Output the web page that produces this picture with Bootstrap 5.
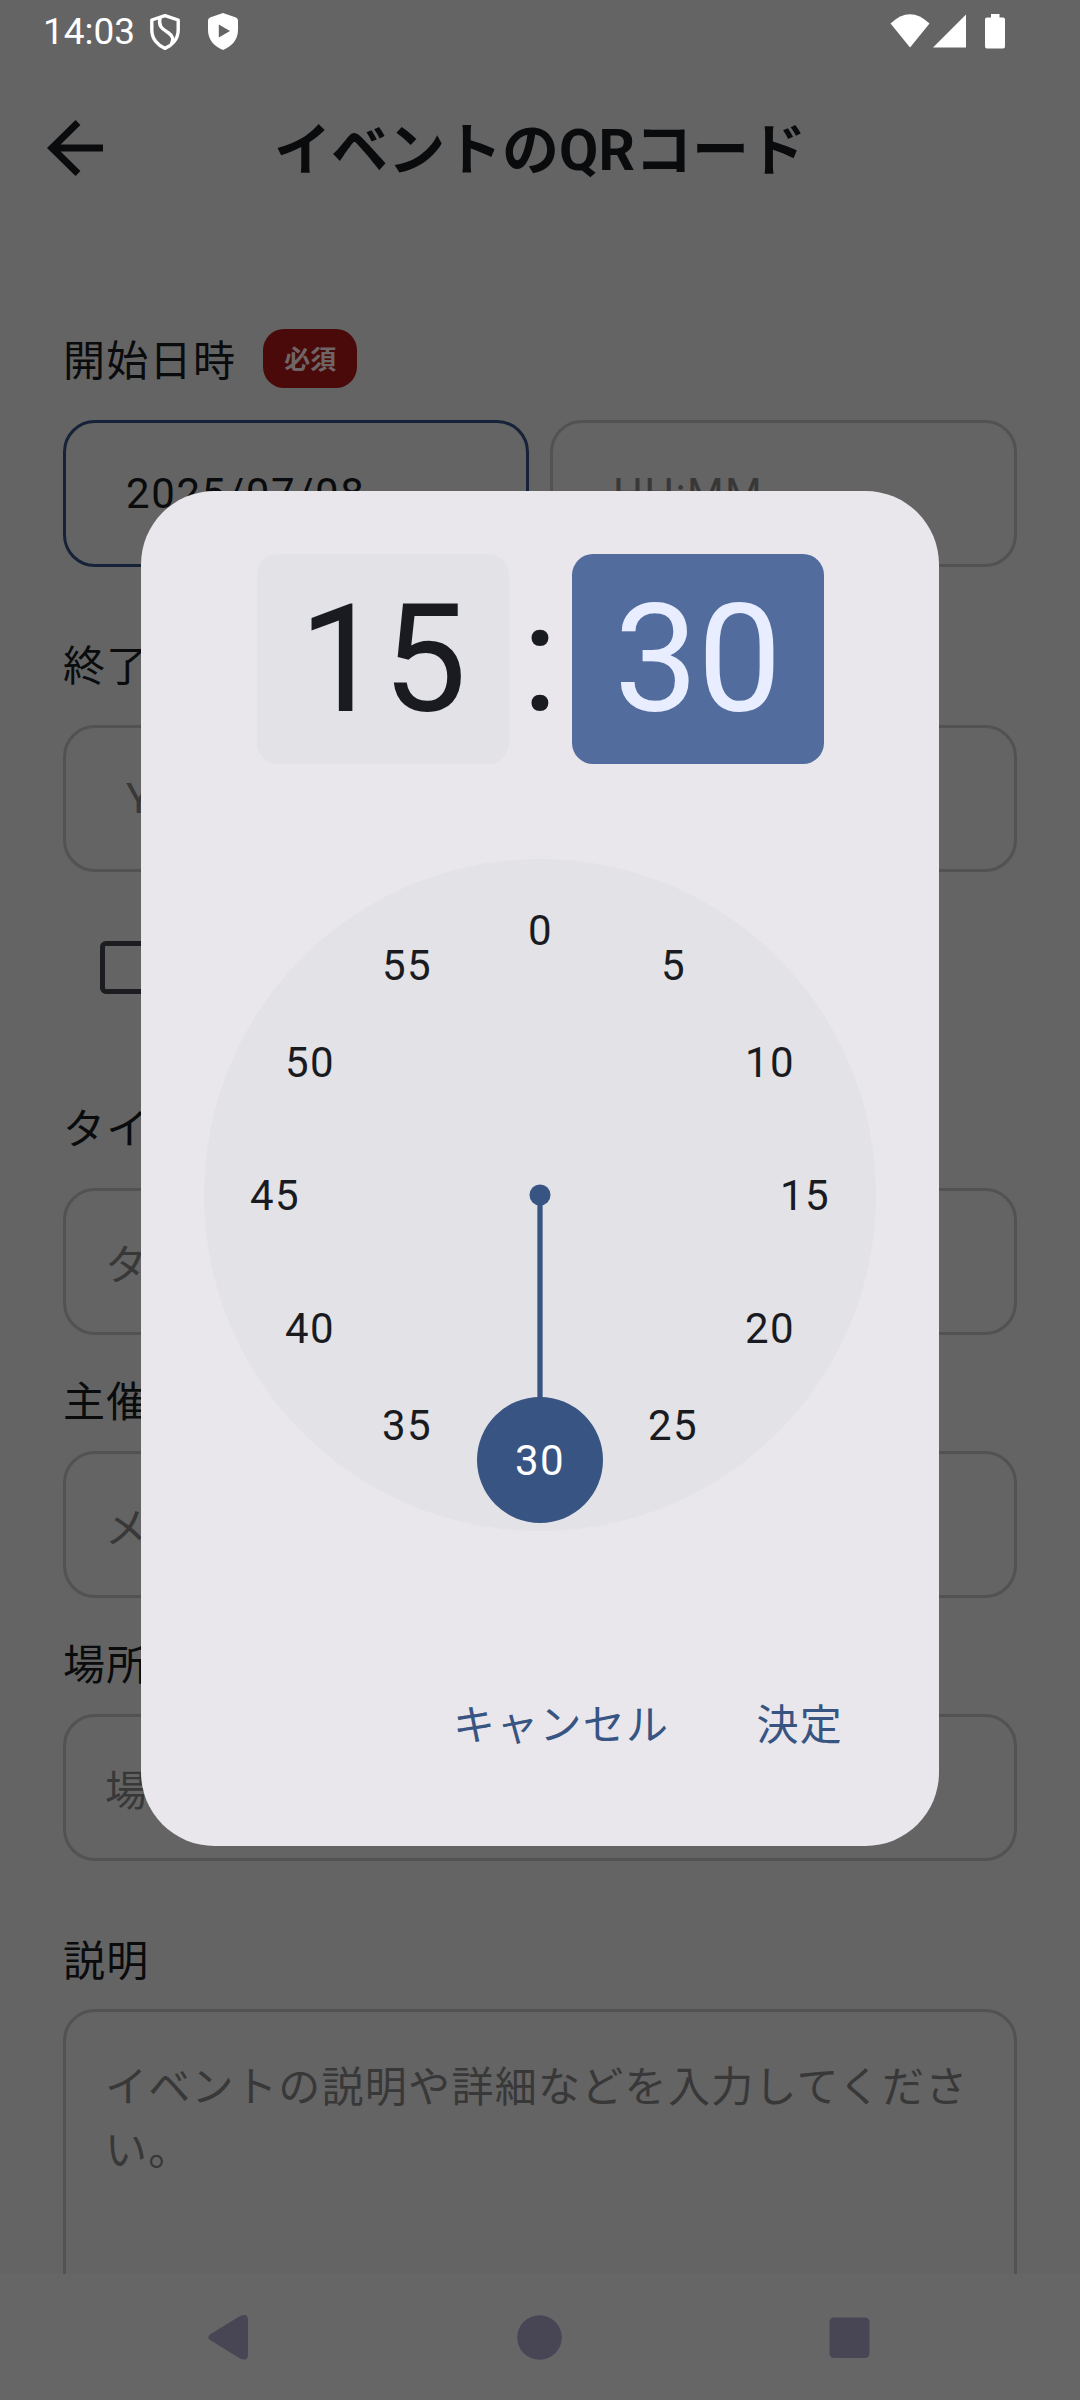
<!DOCTYPE html>
<html lang="ja">
<head>
<meta charset="utf-8">
<meta name="viewport" content="width=device-width, initial-scale=1">
<title>イベントのQRコード</title>
<link href="https://cdn.jsdelivr.net/npm/bootstrap@5.3.0/dist/css/bootstrap.min.css" rel="stylesheet">
<style>
html, body { width: 1080px; height: 2400px; overflow: hidden; }
body { background: #646464; color: #0a0b0d; font-family: Roboto, "Noto Sans CJK JP", sans-serif; font-size: 42px; line-height: 63px; letter-spacing: 1.3px; }
.screen { height: 2400px; }
.statusbar { height: 63px; padding: 0 75px 0 43px; color: #fff; font-size: 37px; letter-spacing: 0; }
.status-shield { margin-left: 15px; }
.appbar { height: 170px; padding: 0 38px; }
.appbar-title { font-size: 57px; font-weight: 700; letter-spacing: 0; line-height: 80px; padding-top: 6px; font-kerning: none; }
.back-spacer { width: 74px; }
.form-area { height: 2041px; padding: 0 63px; }
.label-row { height: 63px; line-height: 68px; }
.label-first span:first-child { padding-top: 6px; }
.required-tag { background: #4b0a0a; color: #6e6666; font-size: 26px; font-weight: 700; line-height: 62px; height: 59px; padding: 0 21px; border-radius: 21px; letter-spacing: 0; margin-left: 27px; }
.field-box { height: 147px; border: 3px solid #525252; border-radius: 32px; padding: 7px 39px 0; color: #383838; }
.field-pair { gap: 21px; }
.field-pair .field-box { padding: 0 0 0 60px; flex: 0 0 466px; }
.field-pair .field-box:last-child { flex: 1 1 0; }
.field-box.active { border-color: #162238; color: #0a0b0d; letter-spacing: 1.6px; }
.field-box.field-area { height: 400px; padding-top: 44px; }
.check-square { width: 53px; height: 53px; border: 5px solid #1b1d20; border-radius: 6px; }
.navbar-sys { height: 126px; background: #666; }
.time-dialog { top: 491px; left: 141px; width: 798px; height: 1355px; border-radius: 73.5px; background: #e9e7ec; color: #1a1b20; padding: 63px; }
.time-chip { width: 252px; height: 210px; border-radius: 21px; background: #e2e2e7; font-size: 150px; line-height: 212px; letter-spacing: -.7px; }
.time-chip.selected { background: #526c9e; color: #e8edff; }
.time-colon { width: 63px; font-size: 150px; line-height: 211px; letter-spacing: 0; height: 210px; }
.dial { width: 672px; height: 672px; margin-top: 95px; }
.dial text { font-size: 42px; fill: #1a1b20; text-anchor: middle; letter-spacing: 1.3px; }
.dial .picked { fill: #fff; }
.dialog-actions { margin-top: 163px; padding-right: 33px; gap: 87px; color: #385482; }
</style>
<script src="https://cdn.jsdelivr.net/npm/bootstrap@5.3.0/dist/js/bootstrap.bundle.min.js"></script>
</head>
<body>
<div class="screen position-relative overflow-hidden d-flex flex-column">
  <header class="statusbar d-flex align-items-center flex-shrink-0">
    <span>14:03</span>
    <svg class="status-shield" width="30" height="36" viewBox="0 0 30 36" fill="none" stroke="#fff" stroke-width="3.4" stroke-linejoin="round"><path d="M15 1.700 L28.200 6 V16 C28.200 25 22 31.500 15 34.300 C8 31.500 1.800 25 1.800 16 V6 Z"/><path d="M10 4 C8 13 13 15 18 18.500 C23 22 24 25 21.500 29.500"/></svg>
    <svg width="30" height="37" viewBox="0 0 30 37" style="margin-left:28px"><path fill="#fff" fill-rule="evenodd" d="M15 0 L28 4.500 Q30 5.300 30 7.500 V17 C30 27 23.500 33.500 15 37 C6.500 33.500 0 27 0 17 V7.500 Q0 5.300 2 4.500 Z M10.800 11.500 V24.500 L22 18 Z"/></svg>
    <div class="d-flex ms-auto align-items-start">
      <svg width="40" height="34" viewBox="0 0 40 34"><path fill="#fff" d="M20 33.500 L.5 9.500 Q20 -9 39.500 9.500 Z"/></svg>
      <svg width="33" height="34" viewBox="0 0 33 34" style="margin-left:3px"><path fill="#fff" d="M33 .5 V33.500 H0 Z"/></svg>
      <svg width="20" height="35" viewBox="0 0 20 35" style="margin-left:19px"><path fill="#fff" d="M6 0 H14.500 V3.500 H18 Q20 3.500 20 5.500 V32.500 Q20 34.500 18 34.500 H2 Q0 34.500 0 32.500 V5.500 Q0 3.500 2 3.500 H6 Z"/></svg>
    </div>
  </header>
  <div class="appbar d-flex align-items-center justify-content-between flex-shrink-0">
    <svg class="back-spacer" height="74" viewBox="0 0 74 74" fill="none" stroke="#0a0b0d" stroke-width="7"><path d="M40 11.500 L14 37 L40 62.500 M13 37 H65"/></svg>
    <h1 class="appbar-title m-0">イベントのQRコード</h1>
    <div class="back-spacer"></div>
  </div>
  <main class="form-area flex-shrink-0 overflow-hidden">
    <div class="label-row label-first d-flex align-items-center" style="margin-top:94px"><span>開始日時</span><span class="required-tag">必須</span></div>
    <div class="field-pair d-flex" style="margin-top:30px">
      <div class="field-box active d-flex align-items-center">2025/07/08</div>
      <div class="field-box d-flex align-items-center">HH:MM</div>
    </div>
    <div class="label-row" style="margin-top:66px">終了日時</div>
    <div class="field-pair d-flex" style="margin-top:29px">
      <div class="field-box d-flex align-items-center">YYYY/MM/DD</div>
      <div class="field-box d-flex align-items-center">HH:MM</div>
    </div>
    <div class="check-square" style="margin:69px 0 0 37px"></div>
    <div class="label-row" style="margin-top:102px">タイトル</div>
    <div class="field-box d-flex align-items-center" style="margin-top:29px">タイトル</div>
    <div class="label-row" style="margin-top:34px">主催者</div>
    <div class="field-box d-flex align-items-center" style="margin-top:19px">メールアドレス</div>
    <div class="label-row" style="margin-top:34px">場所</div>
    <div class="field-box d-flex align-items-center" style="margin-top:19px">場所</div>
    <div class="label-row" style="margin-top:67px">説明</div>
    <div class="field-box field-area" style="margin-top:18px">イベントの説明や詳細などを入力してください。</div>
  </main>
  <footer class="navbar-sys flex-shrink-0">
    <svg width="1080" height="126" viewBox="0 0 1080 126" fill="#484655"><path d="M210 60.500 L240 42 Q248 38.500 248 46 V80.500 Q248 88 240 84.500 L210 66 Q206.500 63.300 210 60.500 Z"/><circle cx="539.500" cy="63.500" r="22.300"/><rect x="829.500" y="43.500" width="40" height="40.500" rx="4.500"/></svg>
  </footer>

  <section class="time-dialog position-absolute d-flex flex-column align-items-center" role="dialog">
    <div class="d-flex text-center">
      <div class="time-chip">15</div><div class="time-colon">:</div><div class="time-chip selected">30</div>
    </div>
    <svg class="dial flex-shrink-0" viewBox="-336 -336 672 672">
      <circle r="336" fill="#e2e2e7"/>
      <path d="M0 0 V210" stroke="#385482" stroke-width="5.250"/>
      <circle r="10.500" fill="#385482"/><circle cy="265" r="63" fill="#385482"/>
      <g>
        <text x="0.500" y="-250">0</text><text x="133.500" y="-215">5</text><text x="230" y="-118">10</text><text x="265" y="15">15</text>
        <text x="230" y="148">20</text><text x="133" y="245">25</text><text class="picked" x="0" y="280">30</text><text x="-133" y="245">35</text>
        <text x="-230" y="148">40</text><text x="-265" y="15">45</text><text x="-230" y="-118">50</text><text x="-133" y="-215">55</text>
      </g>
    </svg>
    <div class="dialog-actions d-flex align-self-stretch justify-content-end"><span>キャンセル</span><span>決定</span></div>
  </section>
</div>
</body>
</html>
